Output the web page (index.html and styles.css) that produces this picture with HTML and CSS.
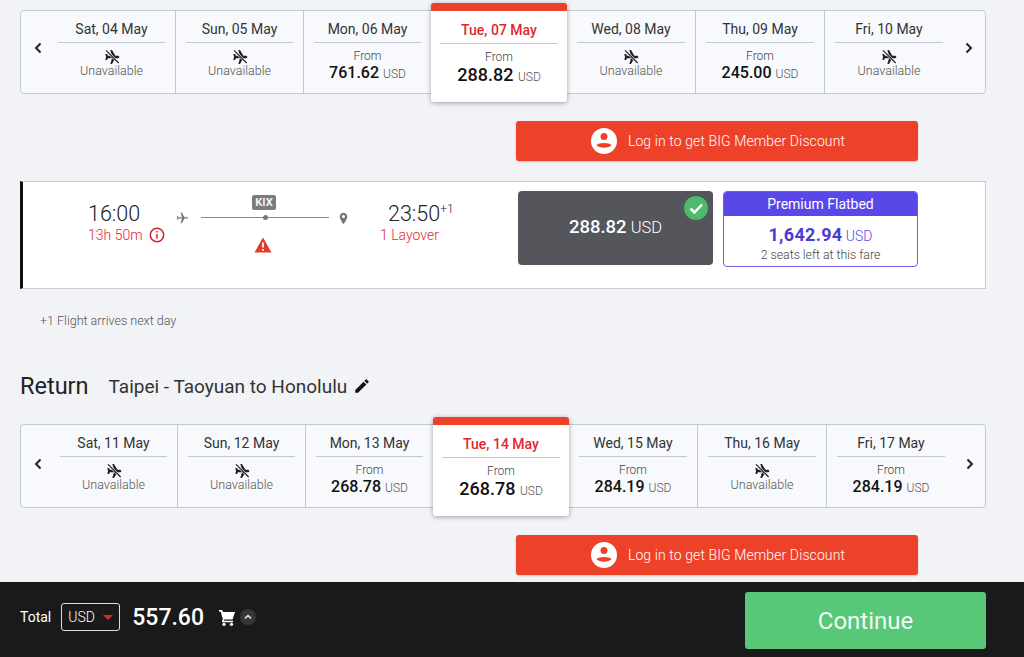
FILE: index.html
```html
<!DOCTYPE html>
<html lang="en">
<head>
    <meta charset="UTF-8">
    <title>Select flights</title>
    <link rel="stylesheet" href="styles.css">
</head>
<body>
    <svg class="icon-defs" width="0" height="0">
        <symbol id="no-flight" viewBox="0 0 24 24">
            <path d="M22.500 14.500v-2.500l-8.500-5V3.200C14 2.400 13 1 12 1S10 2.400 10 3.200V7l-8.500 5v2.500l8.500-2.500V18l-2.500 1.500V22l4.500-1 4.500 1v-2.500L14 18v-6z" transform="rotate(90 12 12)"/>
            <path d="M3 2 22 21" stroke="#f7f9fc" stroke-width="3.500" fill="none"/>
            <path d="M3 2 22 21" stroke="#222" stroke-width="1.800" fill="none"/>
        </symbol>
        <symbol id="member" viewBox="0 0 26 26">
            <circle cx="13" cy="13" r="13" fill="#fff"/>
            <circle cx="13" cy="8.500" r="3.500" fill="#ee4129"/>
            <path d="M5.500 17c2-2.700 13-2.700 15 0-2 3.700-13 3.700-15 0z" fill="#ee4129"/>
        </symbol>
    </svg>

    <main class="page">
        <section class="dates">
            <button class="arrow arrow-left"><svg viewBox="0 0 10 12" class="chevron"><path d="M7.500 1.500 3 6l4.500 4.500"/></svg></button>
            <div class="day">
                <div class="day-name">Sat, 04 May</div>
                <svg class="no-flight"><use href="#no-flight"/></svg>
                <div class="unavailable">Unavailable</div>
            </div>
            <div class="day">
                <div class="day-name">Sun, 05 May</div>
                <svg class="no-flight"><use href="#no-flight"/></svg>
                <div class="unavailable">Unavailable</div>
            </div>
            <div class="day">
                <div class="day-name">Mon, 06 May</div>
                <div class="from">From</div>
                <div class="price">761.62 <span>USD</span></div>
            </div>
            <div class="day selected">
                <div class="day-name">Tue, 07 May</div>
                <div class="from">From</div>
                <div class="price">288.82 <span>USD</span></div>
            </div>
            <div class="day after-selected">
                <div class="day-name">Wed, 08 May</div>
                <svg class="no-flight"><use href="#no-flight"/></svg>
                <div class="unavailable">Unavailable</div>
            </div>
            <div class="day">
                <div class="day-name">Thu, 09 May</div>
                <div class="from">From</div>
                <div class="price">245.00 <span>USD</span></div>
            </div>
            <div class="day">
                <div class="day-name">Fri, 10 May</div>
                <svg class="no-flight"><use href="#no-flight"/></svg>
                <div class="unavailable">Unavailable</div>
            </div>
            <button class="arrow arrow-right"><svg viewBox="0 0 10 12" class="chevron"><path d="M2.500 1.500 7 6l-4.500 4.500"/></svg></button>
        </section>

        <div class="login-row">
            <button class="login-button">
                <svg class="member-icon"><use href="#member"/></svg>
                Log in to get BIG Member Discount
            </button>
        </div>

        <section class="flight">
            <div class="flight-times">
                <div class="leg leg-depart">
                    <div class="time">16:00</div>
                    <div class="red-note">13h 50m
                        <svg class="info" viewBox="0 0 16 16"><circle cx="8" cy="8" r="6.700"/><path d="M8 7v4.500M8 4v1.500"/></svg>
                    </div>
                </div>
                <div class="route">
                    <svg class="plane" viewBox="0 0 24 24"><path d="M21 14.500v-2l-8-5V3.200C13 2.400 12.500 1.500 11.800 1.500S10.500 2.400 10.500 3.200V7.500l-8 5v2l8-2.500V18l-2 1.500V21l3.300-1 3.200 1v-1.500l-2-1.500v-6z" transform="rotate(90 12 12)"/></svg>
                    <div class="route-line">
                        <span class="stop-code">KIX</span>
                        <span class="stop-dot"></span>
                        <svg class="warning" viewBox="0 0 18 16"><path d="M9 .5 17.500 15.500H.5z"/><path class="warning-mark" d="M9 5.500v5M9 12v1.800"/></svg>
                    </div>
                    <svg class="pin" viewBox="0 0 10 14"><path fill-rule="evenodd" d="M5 .5C2.500.5.800 2.400.8 4.800.8 8 5 13.500 5 13.500S9.200 8 9.200 4.800C9.200 2.400 7.500.5 5 .5zm0 6a1.700 1.700 0 1 1 0-3.400 1.700 1.700 0 0 1 0 3.400z"/></svg>
                </div>
                <div class="leg leg-arrive">
                    <div class="time">23:50<sup>+1</sup></div>
                    <div class="red-note layover">1 Layover</div>
                </div>
            </div>
            <div class="fares">
                <div class="fare-selected">
                    <span class="fare-check"><svg viewBox="0 0 24 24"><path d="M6.500 12.500 10.500 16.500 18 8.500"/></svg></span>
                    <strong>288.82</strong> USD
                </div>
                <div class="fare-premium">
                    <div class="fare-head">Premium Flatbed</div>
                    <div class="fare-price"><strong>1,642.94</strong> USD</div>
                    <div class="fare-seats">2 seats left at this fare</div>
                </div>
            </div>
        </section>

        <p class="next-day">+1 Flight arrives next day</p>

        <h2 class="return-title">Return <span>Taipei - Taoyuan to Honolulu</span>
            <svg class="pencil" viewBox="0 0 24 24"><path d="M3 17.250V21h3.750L17.810 9.940l-3.750-3.750L3 17.250zM20.710 7.040a1 1 0 0 0 0-1.410l-2.340-2.340a1 1 0 0 0-1.410 0l-1.830 1.830 3.750 3.750 1.830-1.830z"/></svg>
        </h2>

        <section class="dates dates-return">
            <button class="arrow arrow-left"><svg viewBox="0 0 10 12" class="chevron"><path d="M7.500 1.500 3 6l4.500 4.500"/></svg></button>
            <div class="day">
                <div class="day-name">Sat, 11 May</div>
                <svg class="no-flight"><use href="#no-flight"/></svg>
                <div class="unavailable">Unavailable</div>
            </div>
            <div class="day">
                <div class="day-name">Sun, 12 May</div>
                <svg class="no-flight"><use href="#no-flight"/></svg>
                <div class="unavailable">Unavailable</div>
            </div>
            <div class="day">
                <div class="day-name">Mon, 13 May</div>
                <div class="from">From</div>
                <div class="price">268.78 <span>USD</span></div>
            </div>
            <div class="day selected">
                <div class="day-name">Tue, 14 May</div>
                <div class="from">From</div>
                <div class="price">268.78 <span>USD</span></div>
            </div>
            <div class="day after-selected">
                <div class="day-name">Wed, 15 May</div>
                <div class="from">From</div>
                <div class="price">284.19 <span>USD</span></div>
            </div>
            <div class="day">
                <div class="day-name">Thu, 16 May</div>
                <svg class="no-flight"><use href="#no-flight"/></svg>
                <div class="unavailable">Unavailable</div>
            </div>
            <div class="day">
                <div class="day-name">Fri, 17 May</div>
                <div class="from">From</div>
                <div class="price">284.19 <span>USD</span></div>
            </div>
            <button class="arrow arrow-right"><svg viewBox="0 0 10 12" class="chevron"><path d="M2.500 1.500 7 6l-4.500 4.500"/></svg></button>
        </section>

        <div class="login-row">
            <button class="login-button">
                <svg class="member-icon"><use href="#member"/></svg>
                Log in to get BIG Member Discount
            </button>
        </div>
    </main>

    <footer class="total-bar">
        <div class="total-group">
            <span class="total-label">Total</span>
            <div class="currency">USD <span class="currency-caret"></span></div>
            <span class="total-amount">557.60</span>
            <svg class="cart" viewBox="0 0 16 17"><path d="M0 1h3.200l.8 2h12l-2.500 7.500H5.300l-.5 1.200H14V13.300H2.800l1-3L1.800 2.700H0z"/><circle cx="5" cy="15.300" r="1.600"/><circle cx="12.500" cy="15.300" r="1.600"/></svg>
            <span class="cart-toggle"><svg viewBox="0 0 16 16"><path d="M5 9.500 8 6.500l3 3"/></svg></span>
        </div>
        <button class="continue">Continue</button>
    </footer>
</body>
</html>
```

FILE: styles.css
```css
* {
    box-sizing: border-box;
}
html, body {
    margin: 0;
    height: 657px;
    overflow: hidden;
}
body {
    display: flex;
    flex-direction: column;
    font-family: Roboto, Arial, sans-serif;
    background: #f1f3f7;
    color: #222;
}
button {
    font-family: inherit;
    border: none;
    padding: 0;
}
.icon-defs {
    position: absolute;
}
.page {
    flex: 1;
    padding: 10px 38px 0 20px;
    min-height: 0;
}

/* date strip */
.dates {
    display: flex;
    height: 84px;
    background: #f7f9fc;
    border: 1px solid #c3c9d1;
    border-radius: 4px;
}
.arrow {
    background: none;
    display: flex;
    align-items: center;
    justify-content: center;
    flex-shrink: 0;
    padding-bottom: 9px;
}
.arrow-left {
    width: 27px;
    padding-left: 6px;
}
.arrow-right {
    width: 32px;
    margin-left: auto;
}
.dates-return .arrow {
    padding-bottom: 4px;
}
.dates-return .arrow-left {
    width: 29px;
    padding-left: 4px;
}
.dates-return .arrow-right {
    width: 30px;
}
.chevron {
    width: 10px;
    height: 12px;
    fill: none;
    stroke: #222;
    stroke-width: 2;
}
.day {
    width: 128px;
    padding: 0 10px;
    border-right: 1px solid #c3c9d1;
    text-align: center;
    flex-shrink: 0;
}
.day:nth-last-child(2) {
    border-right: none;
}
.day-name {
    height: 32px;
    margin-bottom: 6px;
    padding-top: 9px;
    font-size: 14px;
    line-height: 18px;
    color: #333;
    border-bottom: 1px solid #c3c9d1;
}
.no-flight {
    display: block;
    width: 16px;
    height: 16px;
    margin: 0 auto;
    fill: #222;
}
.unavailable {
    font-size: 12.500px;
    line-height: 14px;
    color: #555;
    font-weight: 300;
    margin-top: -1px;
}
.from {
    font-size: 12px;
    line-height: 14px;
    font-weight: 300;
    color: #444;
}
.price {
    font-size: 16px;
    line-height: 20px;
    font-weight: 500;
    color: #111;
}
.price span {
    font-size: 12px;
    font-weight: 300;
    color: #555;
}
.selected {
    width: 136px;
    height: 99px;
    margin: -8px 0 0 -1px;
    padding: 8px 9px 0;
    background: #fff;
    border: none;
    border-top: 8px solid #ee4129;
    border-radius: 3px;
    box-shadow: 0 1px 5px rgba(0,0,0,0.35);
    position: relative;
}
.selected .day-name {
    height: 25px;
    padding-top: 2px;
    margin-bottom: 6px;
    color: #e3262e;
    font-weight: 500;
}
.selected .price {
    font-size: 18px;
    line-height: 22px;
}
.after-selected, .after-selected + .day {
    width: 129px;
}

/* login */
.login-row {
    display: flex;
    justify-content: flex-end;
    padding: 27px 68px 20px 0;
}
.login-button {
    display: flex;
    align-items: center;
    justify-content: center;
    gap: 11px;
    width: 402px;
    height: 40px;
    padding-left: 2px;
    background: #ee4129;
    color: #fff;
    font-size: 14px;
    font-weight: 300;
    letter-spacing: 0.1px;
    border-radius: 3px;
    box-shadow: 0 1px 2px rgba(0,0,0,0.2);
}
.member-icon {
    width: 26px;
    height: 26px;
}

/* flight row */
.flight {
    display: flex;
    height: 108px;
    background: #fff;
    border: 1px solid #c9cbcf;
    border-left: 3px solid #111;
    padding: 9px 0 0;
}
.flight-times {
    display: flex;
    width: 495px;
    align-items: flex-start;
}
.leg {
    padding-top: 10px;
}
.leg-depart {
    width: 152px;
    padding-left: 65px;
}
.leg-arrive {
    padding-left: 37px;
}
.time {
    font-size: 21.500px;
    line-height: 26px;
    font-weight: 300;
    color: #222;
}
.time sup {
    font-size: 12px;
    line-height: 0;
}
.red-note {
    font-size: 14px;
    line-height: 16px;
    font-weight: 300;
    color: #e3262e;
    white-space: nowrap;
}
.layover {
    margin-left: -8px;
}
.info {
    width: 16px;
    height: 16px;
    margin-left: 3px;
    vertical-align: -3px;
    fill: none;
    stroke: #d3202a;
    stroke-width: 1.500;
}
.route {
    display: flex;
    align-items: flex-start;
    width: 176px;
    padding-top: 20px;
}
.plane {
    width: 14px;
    height: 14px;
    fill: #777;
}
.pin {
    width: 9px;
    height: 13px;
    margin-top: 1px;
    margin-left: 10px;
    fill: #777;
}
.route-line {
    width: 128px;
    height: 1px;
    margin: 6px 0 0 12px;
    background: #888;
    position: relative;
}
.stop-code {
    position: absolute;
    left: 51px;
    top: -22px;
    width: 24px;
    height: 15px;
    background: #7b7c80;
    color: #f2f2f2;
    font-size: 11px;
    font-weight: 700;
    line-height: 15px;
    text-align: center;
    border-radius: 2px;
}
.stop-dot {
    position: absolute;
    left: 62px;
    top: -2px;
    width: 5px;
    height: 5px;
    background: #777;
    border-radius: 50%;
}
.warning {
    position: absolute;
    left: 53px;
    top: 20px;
    width: 18px;
    height: 16px;
    fill: #e53a25;
}
.warning-mark {
    stroke: #fff;
    stroke-width: 1.800;
    fill: none;
}

/* fares */
.fares {
    display: flex;
    gap: 10px;
}
.fare-selected {
    position: relative;
    width: 195px;
    height: 74px;
    background: #54565c;
    border-radius: 4px;
    color: #fff;
    font-size: 16.500px;
    font-weight: 300;
    line-height: 72px;
    text-align: center;
}
.fare-selected strong {
    font-size: 18.500px;
    font-weight: 500;
}
.fare-check {
    position: absolute;
    top: 5px;
    right: 5px;
    width: 24px;
    height: 24px;
    background: #4fb96d;
    border-radius: 50%;
}
.fare-check svg {
    display: block;
    fill: none;
    stroke: #fff;
    stroke-width: 2.500;
}
.fare-premium {
    width: 195px;
    height: 76px;
    background: #fff;
    border: 1px solid #6a5be2;
    border-radius: 4px;
    text-align: center;
    overflow: hidden;
}
.fare-head {
    height: 24px;
    background: #5a47e8;
    color: #fff;
    font-size: 14px;
    line-height: 24px;
}
.fare-price {
    margin-top: 8px;
    font-size: 14px;
    line-height: 22px;
    font-weight: 300;
    color: #5a47e8;
}
.fare-price strong {
    font-size: 18px;
    font-weight: 700;
    color: #4a3bd6;
    letter-spacing: 0.3px;
}
.fare-seats {
    margin-top: 1px;
    font-size: 12.300px;
    line-height: 14px;
    font-weight: 300;
    color: #444;
}

.next-day {
    margin: 24px 0 0 20px;
    font-size: 12.500px;
    line-height: 15px;
    font-weight: 300;
    color: #555;
}
.return-title {
    display: flex;
    align-items: center;
    margin: 43px 0 0;
    height: 30px;
    font-size: 23.500px;
    font-weight: 400;
    color: #222;
}
.return-title span {
    margin-left: 20px;
    font-size: 19px;
    color: #333;
}
.pencil {
    width: 18px;
    height: 18px;
    margin-left: 6px;
    fill: #111;
}
.dates-return {
    margin-top: 23px;
}

/* bottom bar */
.total-bar {
    display: flex;
    align-items: center;
    height: 75px;
    padding: 2px 38px 0 20px;
    background: #1a1a1a;
    color: #fff;
    flex-shrink: 0;
}
.total-group {
    display: flex;
    align-items: center;
    margin-bottom: 7px;
}
.total-label {
    font-size: 14px;
}
.currency {
    display: flex;
    align-items: center;
    justify-content: space-between;
    width: 59px;
    height: 28px;
    margin-left: 10px;
    padding: 0 6px;
    border: 1px solid #ddd;
    border-radius: 3px;
    font-size: 14px;
    font-weight: 300;
}
.currency-caret {
    width: 0;
    height: 0;
    border-left: 5px solid transparent;
    border-right: 5px solid transparent;
    border-top: 5px solid #e3262e;
}
.total-amount {
    margin-left: 12px;
    font-size: 23px;
    font-weight: 500;
}
.cart {
    width: 16px;
    height: 17px;
    margin-left: 15px;
    fill: #fff;
}
.cart-toggle {
    width: 16px;
    height: 16px;
    margin-left: 5px;
    background: #363636;
    border-radius: 50%;
}
.cart-toggle svg {
    display: block;
    fill: none;
    stroke: #eee;
    stroke-width: 1.500;
}
.continue {
    width: 241px;
    height: 57px;
    margin-left: auto;
    background: #56c878;
    color: #f4fbf6;
    font-size: 24px;
    border-radius: 3px;
}
```
